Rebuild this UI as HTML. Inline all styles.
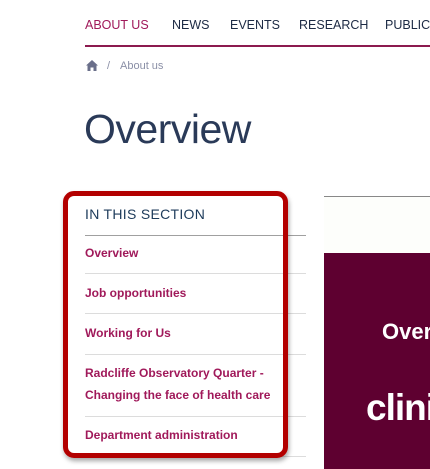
<!DOCTYPE html>
<html><head><meta charset="utf-8"><style>
*{margin:0;padding:0;box-sizing:border-box}
html,body{width:430px;height:469px;overflow:hidden}
body{background:#fff;font-family:"Liberation Sans",sans-serif;position:relative}
.abs{position:absolute;white-space:nowrap}
.nav{top:18px;font-size:12.5px;color:#1c2a44}
.navline{position:absolute;left:85px;top:45px;width:345px;height:2px;background:#8c1a4f}
.item{position:absolute;left:85px;font-size:12px;font-weight:bold;color:#a0195a}
.sep{position:absolute;left:85px;width:221px;height:1px;background:#dcdcdc}
.clip{position:absolute;left:0;top:0;width:430px;height:469px;overflow:hidden}
</style></head><body><div class="clip">
<div class="abs nav" style="left:85px;color:#a0195a">ABOUT US</div>
<div class="abs nav" style="left:172px">NEWS</div>
<div class="abs nav" style="left:230px">EVENTS</div>
<div class="abs nav" style="left:299px">RESEARCH</div>
<div class="abs nav" style="left:385px">PUBLICA</div>
<div class="navline"></div>
<svg class="abs" style="left:86px;top:60px" width="12" height="11" viewBox="0 0 12 11"><path d="M6 0L0 5.5H1.5V11H4.5V7.5H7.5V11H10.5V5.5H12Z" fill="#6a6f8a"/></svg>
<div class="abs" style="left:107px;top:60px;font-size:11px;color:#8a8fa6">/</div>
<div class="abs" style="left:120px;top:60px;font-size:11px;color:#8a8fa6">About us</div>
<div class="abs" style="left:84px;top:106px;font-size:41px;font-weight:normal;color:#2a3a58;letter-spacing:-0.5px">Overview</div>

<div class="abs" style="left:85px;top:206px;font-size:14px;color:#1c3a5a;letter-spacing:0.3px">IN THIS SECTION</div>
<div style="position:absolute;left:85px;top:235px;width:221px;height:1px;background:#a0a0a0"></div>
<div class="item" style="top:246px">Overview</div>
<div class="sep" style="top:273px"></div>
<div class="item" style="top:286px">Job opportunities</div>
<div class="sep" style="top:313px"></div>
<div class="item" style="top:326px">Working for Us</div>
<div class="sep" style="top:354px"></div>
<div class="item" style="top:366px">Radcliffe Observatory Quarter -</div>
<div class="item" style="top:388px">Changing the face of health care</div>
<div class="sep" style="top:416px"></div>
<div class="item" style="top:428px">Department administration</div>
<div class="sep" style="top:456px"></div>

<div style="position:absolute;left:63px;top:191px;width:225px;height:267px;border:5px solid #b30000;border-radius:11px;box-shadow:1px 3px 5px rgba(0,0,0,0.35)"></div>

<div style="position:absolute;left:324px;top:196px;width:106px;height:1px;background:#888"></div>
<div style="position:absolute;left:324px;top:197px;width:106px;height:56px;background:#fdfefb"></div>
<div style="position:absolute;left:324px;top:253px;width:106px;height:216px;background:#5e0030;overflow:hidden">
<div class="abs" style="left:58px;top:66px;font-size:22px;font-weight:bold;color:#fff">Overview</div>
<div class="abs" style="left:42px;top:134px;font-size:37px;font-weight:bold;color:#fff;letter-spacing:-1px">clinical</div>
</div>
</div></body></html>
